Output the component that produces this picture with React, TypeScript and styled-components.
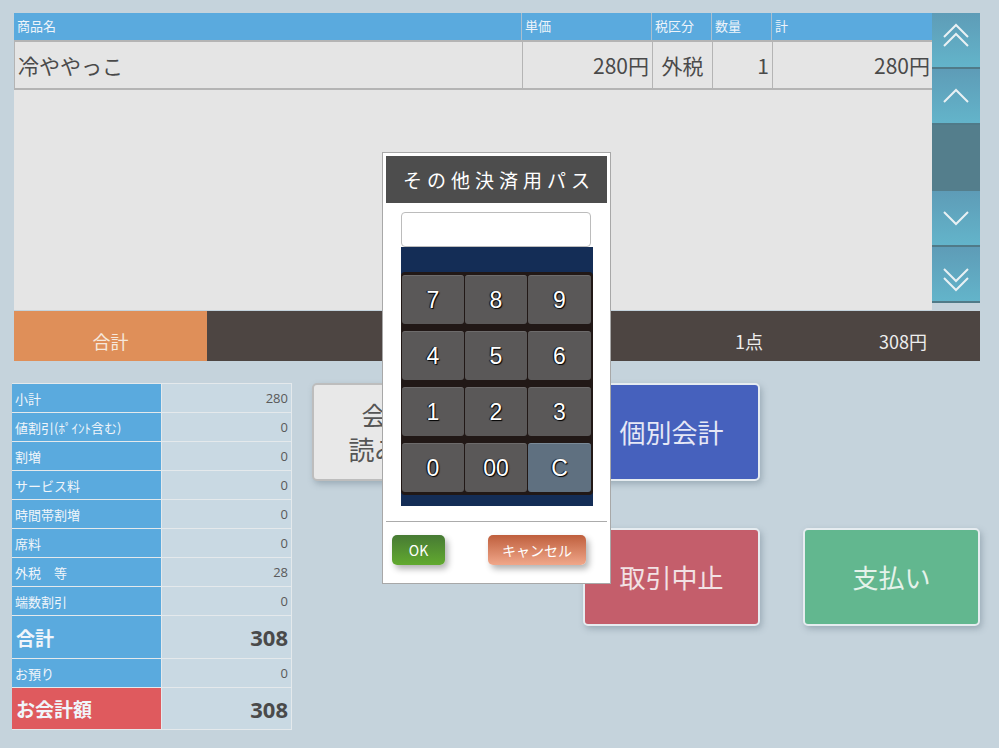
import React from 'react';
import styled, { createGlobalStyle, css } from 'styled-components';

const JP = `"Noto Sans CJK JP", "Noto Sans", sans-serif`;

const GlobalStyle = createGlobalStyle`
  html, body {
    margin: 0;
    padding: 0;
    background: #c5d3dc;
  }
  body {
    font-family: ${JP};
    width: 999px;
    height: 748px;
    overflow: hidden;
  }
`;

const StyledPage = styled.div`
  position: relative;
  width: 999px;
  height: 748px;
  padding: 13px 19px 0 14px;
  box-sizing: border-box;
`;

// ---------- item list ----------
const StyledTop = styled.div`
  display: flex;
  align-items: flex-start;
`;

const StyledList = styled.div`
  width: 918px;
  height: 297px;
  background: #e5e5e5;
`;

const StyledHeadRow = styled.div`
  display: grid;
  grid-template-columns: 507px 130px 60px 60px 161px;
  height: 27px;
  background: #5aaade;
  border-bottom: 2px solid #b4b4b4;
`;

const StyledHeadCell = styled.div<{ $first?: boolean }>`
  font-size: 13px;
  line-height: 26px;
  color: #eef4fa;
  padding-left: 3px;
  border-left: ${(p) => (p.$first ? 'none' : '1px solid #a9bfd0')};
`;

const StyledItemRow = styled.div`
  display: grid;
  grid-template-columns: 507px 130px 60px 60px 161px;
  height: 46px;
  border-bottom: 2px solid #b4b4b4;
  border-left: 1px solid #b4b4b4;
`;

const StyledItemCell = styled.div<{ $align?: string; $first?: boolean }>`
  font-size: 21px;
  line-height: 46px;
  color: #4a4a4a;
  padding: 0 3px;
  text-align: ${(p) => p.$align || 'right'};
  border-left: ${(p) => (p.$first ? 'none' : '1px solid #b4b4b4')};
  white-space: nowrap;
`;

const StyledScroll = styled.div`
  width: 48px;
  display: flex;
  flex-direction: column;
`;

const StyledScrollBtn = styled.div<{ $dark?: boolean }>`
  height: ${(p) => (p.$dark ? '66px' : '54px')};
  display: flex;
  align-items: center;
  justify-content: center;
  ${(p) =>
    p.$dark
      ? css`
          background: #547e8c;
        `
      : css`
          background: linear-gradient(#5e9cb7, #63b4ca);
          border-bottom: 2px solid #507a88;
        `}
`;

// ---------- total bar ----------
const StyledTotalBar = styled.div`
  display: flex;
  height: 50px;
  margin-top: 1px;
  width: 966px;
  background: #4d4542;
`;

const StyledTotalLabel = styled.div`
  width: 193px;
  background: #df8f59;
  color: #f6e8dc;
  font-size: 18px;
  text-align: center;
  line-height: 60px;
`;

const StyledTotalValue = styled.div<{ $width: number }>`
  width: ${(p) => p.$width}px;
  color: #eee;
  font-size: 18px;
  line-height: 60px;
  text-align: right;
`;

// ---------- summary + actions ----------
const StyledBottom = styled.div`
  display: flex;
  align-items: flex-start;
  margin-top: 22px;
  margin-left: -2px;
`;

const StyledSummary = styled.div`
  width: 280px;
  display: grid;
  grid-template-columns: 150px 129px;
  border-right: 1px solid #e4e9ec;
  border-top: 1px solid #e4e9ec;
`;

const StyledSumLabel = styled.div<{ $big?: boolean; $red?: boolean; $h: number }>`
  height: ${(p) => p.$h}px;
  background: ${(p) => (p.$red ? '#df5a5e' : '#5aaade')};
  color: #f0f5fa;
  font-size: ${(p) => (p.$big ? '19px' : '13px')};
  font-weight: ${(p) => (p.$big ? 'bold' : 'normal')};
  padding-left: ${(p) => (p.$big ? '4px' : '3px')};
  display: flex;
  align-items: center;
  border-bottom: 1px solid #e4e9ec;
  border-right: 1px solid #e4e9ec;
  white-space: nowrap;
`;

const StyledSumValue = styled.div<{ $big?: boolean; $h: number }>`
  height: ${(p) => p.$h}px;
  background: #c9d9e3;
  color: ${(p) => (p.$big ? '#4a4a4a' : '#5a5a5a')};
  font-family: "Open Sans", "Noto Sans", sans-serif;
  font-size: ${(p) => (p.$big ? '22px' : '13px')};
  font-weight: ${(p) => (p.$big ? 'bold' : 'normal')};
  padding-right: 3px;
  display: flex;
  align-items: center;
  justify-content: flex-end;
  border-bottom: 1px solid #e4e9ec;
`;

const StyledActions = styled.div`
  margin-left: 20px;
  display: grid;
  grid-template-columns: 271px 220px 177px;
  grid-template-rows: 98px 98px;
  row-gap: 47px;
`;

const StyledAction = styled.div<{ $bg: string; $fg: string; $col: number; $row: number }>`
  grid-column: ${(p) => p.$col};
  grid-row: ${(p) => p.$row};
  width: 177px;
  box-sizing: border-box;
  background: ${(p) => p.$bg};
  color: ${(p) => p.$fg};
  border: 2px solid ${(p) => (p.$bg === '#e8e8e8' ? '#bdbdbd' : '#e6ecf0')};
  border-radius: 5px;
  box-shadow: 2px 3px 6px rgba(80, 100, 115, 0.35);
  display: flex;
  flex-direction: column;
  align-items: center;
  justify-content: center;
  font-size: 26px;
  line-height: 1.3;
  text-align: center;
`;

// ---------- password dialog ----------
const StyledDialog = styled.div`
  position: absolute;
  left: 382px;
  top: 152px;
  width: 229px;
  height: 432px;
  box-sizing: border-box;
  background: #fff;
  border: 1px solid #a8a8a8;
  padding: 3px;
  display: flex;
  flex-direction: column;
`;

const StyledDialogTitle = styled.div`
  height: 47px;
  background: #4d4d4d;
  color: #fff;
  font-size: 19px;
  letter-spacing: 5px;
  text-align: center;
  line-height: 47px;
  padding-left: 5px;
  white-space: nowrap;
`;

const StyledDialogBody = styled.div`
  padding: 9px 14px 0 15px;
`;

const StyledInput = styled.div`
  width: 190px;
  height: 35px;
  box-sizing: border-box;
  border: 1px solid #bcbcbc;
  border-radius: 4px;
`;

const StyledPadWrap = styled.div`
  height: 259px;
  background: #142d56;
  padding-top: 25px;
  box-sizing: border-box;
`;

const StyledPad = styled.div`
  background: #211816;
  border-radius: 4px;
  padding: 3px 1px 3px 1px;
  display: grid;
  grid-template-columns: 62px 62px 63px;
  grid-auto-rows: 49px;
  gap: 7px 1px;
`;

const StyledKey = styled.div<{ $clear?: boolean }>`
  background: ${(p) => (p.$clear ? '#5f7080' : '#5a5858')};
  border-top: 1px solid ${(p) => (p.$clear ? '#7a8a98' : '#6d6b6b')};
  border-radius: 3px;
  color: #fff;
  font-family: "Liberation Sans", Arial, sans-serif;
  font-size: 23px;
  display: flex;
  align-items: center;
  justify-content: center;
  text-shadow: 1px 1px 1px #000, -1px 0 1px #000;
`;

const StyledRule = styled.div`
  height: 1px;
  background: #ababab;
  margin-top: 15px;
`;

const StyledDialogFoot = styled.div`
  display: flex;
  justify-content: space-between;
  padding: 13px 21px 0 6px;
`;

const StyledDlgBtn = styled.div<{ $from: string; $to: string; $w: number }>`
  width: ${(p) => p.$w}px;
  height: 30px;
  border-radius: 5px;
  background: linear-gradient(${(p) => p.$from}, ${(p) => p.$to});
  color: #fff;
  font-size: 14px;
  display: flex;
  align-items: center;
  justify-content: center;
  box-shadow: 3px 4px 6px rgba(0, 0, 0, 0.3);
`;

// single or double chevron for the list scroller
function Chevrons({ up, double }: { up: boolean; double?: boolean }): JSX.Element {
  const paths = double
    ? up
      ? ['M12 17 L24 5 L36 17', 'M12 26 L24 14 L36 26']
      : ['M12 15 L24 27 L36 15', 'M12 24 L24 36 L36 24']
    : up
      ? ['M12 26 L24 14 L36 26']
      : ['M12 14 L24 26 L36 14'];
  return (
    <svg width="48" height="40" viewBox="0 0 48 40">
      {paths.map((d) => (
        <path key={d} d={d} stroke="#e9f1f4" strokeWidth="2" fill="none" />
      ))}
    </svg>
  );
}

const summary = [
  { label: '小計', value: '280', h: 28 },
  { label: '値割引(ﾎﾟｲﾝﾄ含む)', value: '0', h: 28 },
  { label: '割増', value: '0', h: 28 },
  { label: 'サービス料', value: '0', h: 28 },
  { label: '時間帯割増', value: '0', h: 28 },
  { label: '席料', value: '0', h: 28 },
  { label: '外税　等', value: '28', h: 28 },
  { label: '端数割引', value: '0', h: 28 },
  { label: '合計', value: '308', h: 42, big: true },
  { label: 'お預り', value: '0', h: 28 },
  { label: 'お会計額', value: '308', h: 41, big: true, red: true },
];

const keys = ['7', '8', '9', '4', '5', '6', '1', '2', '3', '0', '00', 'C'];

function App(): JSX.Element {
  return (
    <StyledPage>
      <GlobalStyle />
      <StyledTop>
        <StyledList>
          <StyledHeadRow>
            <StyledHeadCell $first>商品名</StyledHeadCell>
            <StyledHeadCell>単価</StyledHeadCell>
            <StyledHeadCell>税区分</StyledHeadCell>
            <StyledHeadCell>数量</StyledHeadCell>
            <StyledHeadCell>計</StyledHeadCell>
          </StyledHeadRow>
          <StyledItemRow>
            <StyledItemCell $first $align="left">冷ややっこ</StyledItemCell>
            <StyledItemCell>280円</StyledItemCell>
            <StyledItemCell $align="center">外税</StyledItemCell>
            <StyledItemCell>1</StyledItemCell>
            <StyledItemCell>280円</StyledItemCell>
          </StyledItemRow>
        </StyledList>
        <StyledScroll>
          <StyledScrollBtn><Chevrons up double /></StyledScrollBtn>
          <StyledScrollBtn><Chevrons up /></StyledScrollBtn>
          <StyledScrollBtn $dark />
          <StyledScrollBtn><Chevrons up={false} /></StyledScrollBtn>
          <StyledScrollBtn><Chevrons up={false} double /></StyledScrollBtn>
        </StyledScroll>
      </StyledTop>

      <StyledTotalBar>
        <StyledTotalLabel>合計</StyledTotalLabel>
        <StyledTotalValue $width={556}>1点</StyledTotalValue>
        <StyledTotalValue $width={164}>308円</StyledTotalValue>
      </StyledTotalBar>

      <StyledBottom>
        <StyledSummary>
          {summary.map((row) => (
            <React.Fragment key={row.label}>
              <StyledSumLabel $h={row.h} $big={row.big} $red={row.red}>
                {row.label}
              </StyledSumLabel>
              <StyledSumValue $h={row.h} $big={row.big}>
                {row.value}
              </StyledSumValue>
            </React.Fragment>
          ))}
        </StyledSummary>

        <StyledActions>
          <StyledAction $bg="#e8e8e8" $fg="#555" $col={1} $row={1}>
            <div>会員証</div>
            <div>読み込み</div>
          </StyledAction>
          <StyledAction $bg="#4661bd" $fg="#e6e8f6" $col={2} $row={1}>
            個別会計
          </StyledAction>
          <StyledAction $bg="#c45e6b" $fg="#f2e2e4" $col={2} $row={2}>
            取引中止
          </StyledAction>
          <StyledAction $bg="#62b78f" $fg="#e4f2ea" $col={3} $row={2}>
            支払い
          </StyledAction>
        </StyledActions>
      </StyledBottom>

      <StyledDialog>
        <StyledDialogTitle>その他決済用パス</StyledDialogTitle>
        <StyledDialogBody>
          <StyledInput />
          <StyledPadWrap>
            <StyledPad>
              {keys.map((k) => (
                <StyledKey key={k} $clear={k === 'C'}>
                  {k}
                </StyledKey>
              ))}
            </StyledPad>
          </StyledPadWrap>
        </StyledDialogBody>
        <StyledRule />
        <StyledDialogFoot>
          <StyledDlgBtn $from="#477a34" $to="#62aa2f" $w={53}>OK</StyledDlgBtn>
          <StyledDlgBtn $from="#bf5f3d" $to="#f0a78a" $w={98}>キャンセル</StyledDlgBtn>
        </StyledDialogFoot>
      </StyledDialog>
    </StyledPage>
  );
}

export default App;
